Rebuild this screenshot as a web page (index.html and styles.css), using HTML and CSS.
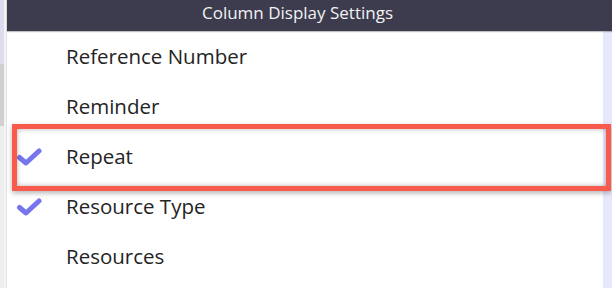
FILE: index.html
```html
<!DOCTYPE html>
<html>
<head>
<meta charset="utf-8">
<link rel="stylesheet" href="styles.css">
</head>
<body>
<div class="page">
  <div class="side">
    <div class="side-top"></div>
    <div class="side-mid"></div>
    <div class="side-bot"></div>
  </div>
  <div class="main">
    <div class="header">Column Display Settings</div>
    <div class="body">
      <div class="panel">
        <div class="item"><span class="check"></span><span class="label">Reference Number</span></div>
        <div class="item"><span class="check"></span><span class="label">Reminder</span></div>
        <div class="item"><span class="check"><svg viewBox="0 0 26 18" width="26" height="18"><path d="M3.5 9.5 L10 15 L23 3" fill="none" stroke="#7575ee" stroke-width="5" stroke-linecap="round" stroke-linejoin="round"/></svg></span><span class="label">Repeat</span></div>
        <div class="item"><span class="check"><svg viewBox="0 0 26 18" width="26" height="18"><path d="M3.5 9.5 L10 15 L23 3" fill="none" stroke="#7575ee" stroke-width="5" stroke-linecap="round" stroke-linejoin="round"/></svg></span><span class="label">Resource Type</span></div>
        <div class="item"><span class="check"></span><span class="label">Resources</span></div>
      </div>
      <div class="edge"></div>
    </div>
  </div>
  <div class="highlight"></div>
</div>
</body>
</html>
```
FILE: styles.css
```css
html, body {
  margin: 0;
  padding: 0;
  background: #ffffff;
}
.page {
  position: relative;
  display: flex;
  width: 612px;
  height: 288px;
  overflow: hidden;
  font-family: "Open Sans", "Noto Sans", sans-serif;
}
.side {
  width: 7px;
  display: flex;
  flex-direction: column;
  background: #f4f4f6;
  border-right: 1px solid #e2e2e6;
  box-sizing: border-box;
}
.side-top {
  height: 64px;
  background: #dcdcee;
  width: 4px;
}
.side-mid {
  height: 62px;
  background: #d0d0d0;
  width: 4px;
}
.side-bot {
  flex: 1;
  width: 4px;
  background: #eeeeee;
}
.main {
  flex: 1;
  display: flex;
  flex-direction: column;
}
.header {
  height: 31px;
  background: #3c3c4e;
  color: #f2f2f2;
  font-size: 17px;
  text-align: center;
  line-height: 26px;
  padding-right: 24px;
  box-shadow: 0 1px 1px rgba(0,0,0,0.25);
  position: relative;
  z-index: 1;
}
.body {
  flex: 1;
  display: flex;
}
.panel {
  flex: 1;
  background: #ffffff;
}
.edge {
  width: 9px;
  background: #e8e8fc;
}
.item {
  height: 50px;
  display: flex;
  align-items: center;
  color: #242424;
  font-size: 20.5px;
}
.check {
  width: 59px;
  padding-left: 9px;
  padding-top: 1px;
  box-sizing: border-box;
  display: flex;
  align-items: center;
}
.highlight {
  position: absolute;
  left: 12px;
  top: 124px;
  width: 589px;
  height: 57px;
  border: 5px solid #f85a4c;
  box-shadow: 0 2px 5px rgba(0,0,0,0.3), inset 0 0 5px rgba(0,0,0,0.3);
}
```
